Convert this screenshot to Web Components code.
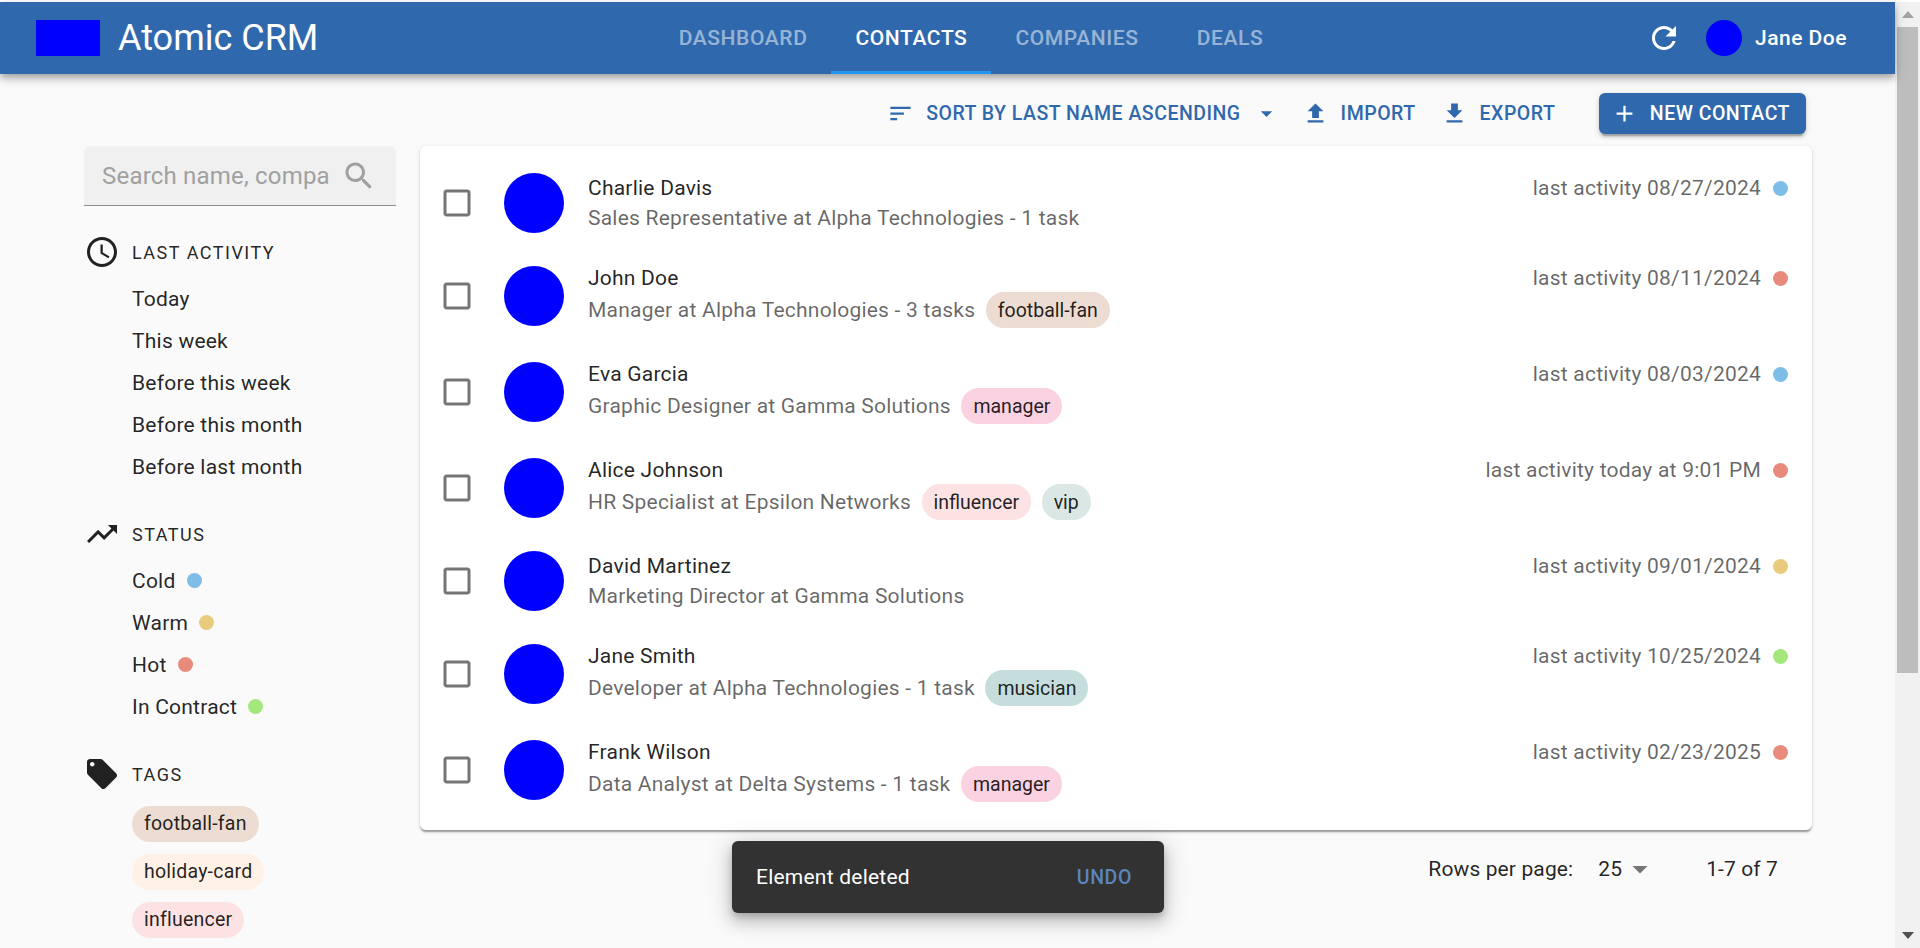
<!DOCTYPE html>
<html lang="en">
<head>
<meta charset="utf-8">
<title>Atomic CRM</title>
<style>
  html, body { margin: 0; height: 948px; overflow: hidden; background: #fff; }
  body { font-family: Roboto, "Liberation Sans", sans-serif; font-size: 21px; color: rgba(0,0,0,.87); }
</style>
</head>
<body>
<crm-app></crm-app>

<script>
const ICONS = {
  clock: 'M11.99 2C6.47 2 2 6.48 2 12s4.47 10 9.99 10C17.52 22 22 17.52 22 12S17.52 2 11.99 2zM12 20c-4.42 0-8-3.58-8-8s3.58-8 8-8 8 3.58 8 8-3.58 8-8 8zM12.5 7H11v6l5.25 3.15.75-1.23-4.5-2.67z',
  trend: 'M16 6l2.29 2.29-4.88 4.88-4-4L2 16.59 3.41 18l6-6 4 4 6.3-6.29L22 12V6z',
  tag: 'M21.41 11.58l-9-9C12.05 2.22 11.55 2 11 2H4c-1.1 0-2 .9-2 2v7c0 .55.22 1.05.59 1.42l9 9c.36.36.86.58 1.41.58.55 0 1.05-.22 1.41-.59l7-7c.37-.36.59-.86.59-1.41 0-.55-.23-1.06-.59-1.42zM5.5 7C4.67 7 4 6.33 4 5.5S4.67 4 5.5 4 7 4.67 7 5.5 6.33 7 5.5 7z',
  search: 'M15.5 14h-.79l-.28-.27C15.41 12.59 16 11.11 16 9.5 16 5.91 13.09 3 9.5 3S3 5.91 3 9.5 5.91 16 9.5 16c1.61 0 3.09-.59 4.23-1.57l.27.28v.79l5 4.99L20.49 19l-4.99-5zm-6 0C7.01 14 5 11.99 5 9.5S7.01 5 9.5 5 14 7.01 14 9.5 11.99 14 9.5 14z',
  refresh: 'M17.65 6.35C16.2 4.9 14.21 4 12 4c-4.42 0-7.99 3.58-7.99 8s3.57 8 7.99 8c3.73 0 6.84-2.55 7.73-6h-2.08c-.82 2.33-3.04 4-5.65 4-3.31 0-6-2.69-6-6s2.69-6 6-6c1.66 0 3.14.69 4.22 1.78L13 11h7V4l-2.35 2.35z',
  sort: 'M3 18h6v-2H3v2zM3 6v2h18V6H3zm0 7h12v-2H3v2z',
  upload: 'M9 16h6v-6h4l-7-7-7 7h4zm-4 2h14v2H5z',
  download: 'M19 9h-4V3H9v6H5l7 7 7-7zM5 18v2h14v-2H5z',
  add: 'M19 13h-6v6h-2v-6H5v-2h6V5h2v6h6v2z',
  box: 'M19 5v14H5V5h14m0-2H5c-1.1 0-2 .9-2 2v14c0 1.1.9 2 2 2h14c1.1 0 2-.9 2-2V5c0-1.1-.9-2-2-2z',
  caret: 'M7 10l5 5 5-5z'
};

const STATUS = { cold: '#7dbde8', warm: '#e8cb7d', hot: '#e88b7d', contract: '#a4e87d' };
const TAGS = {
  'football-fan': '#eddcd2', 'holiday-card': '#fff1e6', 'influencer': '#fde2e4',
  'manager': '#fad2e1', 'musician': '#c5dedd', 'vip': '#dbe7e4'
};

const CONTACTS = [
  { name: 'Charlie Davis', sub: 'Sales Representative at Alpha Technologies - 1 task', when: 'last activity 08/27/2024', status: 'cold', tags: [] },
  { name: 'John Doe', sub: 'Manager at Alpha Technologies - 3 tasks', when: 'last activity 08/11/2024', status: 'hot', tags: ['football-fan'] },
  { name: 'Eva Garcia', sub: 'Graphic Designer at Gamma Solutions', when: 'last activity 08/03/2024', status: 'cold', tags: ['manager'] },
  { name: 'Alice Johnson', sub: 'HR Specialist at Epsilon Networks', when: 'last activity today at 9:01 PM', status: 'hot', tags: ['influencer', 'vip'] },
  { name: 'David Martinez', sub: 'Marketing Director at Gamma Solutions', when: 'last activity 09/01/2024', status: 'warm', tags: [] },
  { name: 'Jane Smith', sub: 'Developer at Alpha Technologies - 1 task', when: 'last activity 10/25/2024', status: 'contract', tags: ['musician'] },
  { name: 'Frank Wilson', sub: 'Data Analyst at Delta Systems - 1 task', when: 'last activity 02/23/2025', status: 'hot', tags: ['manager'] }
];

class BaseElement extends HTMLElement {
  constructor() {
    super();
    this.attachShadow({mode: 'open'});
  }
  connectedCallback() {
    this.shadowRoot.innerHTML = this.render();
  }
}

class CrmIcon extends BaseElement {
  render() {
    const size = this.getAttribute('size') || 36;
    return `<style>
        :host { display: block; width: ${size}px; height: ${size}px; flex: none; }
        svg { display: block; width: 100%; height: 100%; fill: currentColor; }
      </style>
      <svg viewBox="0 0 24 24"><path d="${ICONS[this.getAttribute('name')]}"></path></svg>`;
  }
}

class StatusDot extends BaseElement {
  render() {
    return `<style>
        :host { display: inline-block; width: 15px; height: 15px; border-radius: 50%; flex: none;
                background: ${STATUS[this.getAttribute('status')]}; }
      </style>`;
  }
}

class TagChip extends BaseElement {
  render() {
    return `<style>
        :host { display: inline-flex; align-items: center; height: 36px; padding: 0 12px; border-radius: 18px;
                font-size: 19.5px; color: rgba(0,0,0,.87); background: ${TAGS[this.textContent.trim()]}; }
      </style><slot></slot>`;
  }
}

class NavTab extends BaseElement {
  render() {
    return `<style>
        :host { display: flex; align-items: center; justify-content: center; box-sizing: border-box; height: 72px;
                min-width: 135px; padding: 0 24px; font-size: 21px; font-weight: 500; letter-spacing: .6px;
                color: #fff; opacity: .5; position: relative; }
        :host([active]) { opacity: 1; }
        :host([active])::after { content: ''; position: absolute; left: 0; right: 0; bottom: 0; height: 3px; background: #2196f3; }
      </style><slot></slot>`;
  }
}

class CrmHeader extends BaseElement {
  render() {
    return `<style>
        :host { display: flex; align-items: center; justify-content: space-between; height: 72px; flex: none;
                background: #2f68ac; color: #fff; position: relative; z-index: 2;
                box-shadow: 0 3px 6px -1px rgba(0,0,0,.2), 0 6px 7px 0 rgba(0,0,0,.14), 0 1.5px 15px 0 rgba(0,0,0,.12); }
        .brand { display: flex; align-items: center; padding-left: 36px; }
        .logo { width: 64px; height: 36px; background: #0000ff; margin-right: 18px; }
        .title { font-size: 36px; line-height: 1; }
        nav { display: flex; }
        .right { display: flex; align-items: center; padding-right: 48px; }
        .reload { padding: 12px; }
        .avatar { width: 36px; height: 36px; border-radius: 50%; background: #0000ff; margin: 0 13px 0 12px; }
        .user { font-weight: 500; font-size: 21px; letter-spacing: .5px; }
      </style>
      <div class="brand"><div class="logo"></div><div class="title">Atomic CRM</div></div>
      <nav>
        <nav-tab>DASHBOARD</nav-tab>
        <nav-tab active>CONTACTS</nav-tab>
        <nav-tab>COMPANIES</nav-tab>
        <nav-tab>DEALS</nav-tab>
      </nav>
      <div class="right">
        <div class="reload"><crm-icon name="refresh"></crm-icon></div>
        <div class="avatar"></div>
        <div class="user">Jane Doe</div>
      </div>`;
  }
}

class ActionBar extends BaseElement {
  render() {
    return `<style>
        :host { display: flex; justify-content: flex-end; align-items: center; box-sizing: border-box; height: 72px;
                padding: 6px 6px 0 0; color: #2f68ac; font-size: 19.5px; font-weight: 500; letter-spacing: .5px; }
        .act { display: flex; align-items: center; gap: 12px; }
        .new { display: flex; align-items: center; gap: 12px; height: 41px; margin-left: 44px; padding: 0 16px 0 11.5px;
               border-radius: 6px; background: #2f68ac; color: #fff;
               box-shadow: 0 4.5px 1.5px -3px rgba(0,0,0,.2), 0 3px 3px 0 rgba(0,0,0,.14), 0 1.5px 7.5px 0 rgba(0,0,0,.12); }
      </style>
      <div class="act" style="margin-right:22px"><crm-icon name="sort" size="27"></crm-icon>SORT BY LAST NAME ASCENDING<crm-icon name="caret" size="27"></crm-icon></div>
      <div class="act" style="margin-right:25px"><crm-icon name="upload" size="27"></crm-icon>IMPORT</div>
      <div class="act"><crm-icon name="download" size="27"></crm-icon>EXPORT</div>
      <div class="new"><crm-icon name="add" size="27"></crm-icon>NEW CONTACT</div>`;
  }
}

class FilterSection extends BaseElement {
  render() {
    return `<style>
        :host { display: block; margin-bottom: 28.5px; }
        .head { display: flex; align-items: center; gap: 12px; height: 36px; margin-bottom: 7.5px; }
        .label { font-size: 18px; letter-spacing: 1.5px; }
        .items { padding-left: 48px; }
      </style>
      <div class="head"><crm-icon name="${this.getAttribute('icon')}"></crm-icon><div class="label">${this.getAttribute('label')}</div></div>
      <div class="items"><slot></slot></div>`;
  }
}

class FilterItem extends BaseElement {
  render() {
    return `<style>
        :host { display: flex; align-items: center; gap: 11px; height: 42px; font-size: 21px; letter-spacing: .225px; }
        :host([chip]) { height: 48px; }
      </style><slot></slot>`;
  }
}

class SearchBox extends BaseElement {
  render() {
    return `<style>
        :host { display: flex; align-items: center; box-sizing: border-box; height: 60px; padding: 0 18px; margin-bottom: 28px;
                background: #f0f0f0; border-bottom: 1.5px solid #8c8c8c; border-radius: 6px 6px 0 0; color: #a0a0a0; }
        .ph { width: 226px; white-space: nowrap; font-size: 24px; letter-spacing: .2px; margin-right: 13px; }
      </style>
      <div class="ph">Search name, compa</div><crm-icon name="search"></crm-icon>`;
  }
}

class FilterSidebar extends BaseElement {
  render() {
    return `<style>
        :host { display: block; width: 312px; flex: none; margin-right: 24px; }
      </style>
      <search-box></search-box>
      <filter-section icon="clock" label="LAST ACTIVITY">
        <filter-item>Today</filter-item>
        <filter-item>This week</filter-item>
        <filter-item>Before this week</filter-item>
        <filter-item>Before this month</filter-item>
        <filter-item>Before last month</filter-item>
      </filter-section>
      <filter-section icon="trend" label="STATUS">
        <filter-item>Cold <status-dot status="cold"></status-dot></filter-item>
        <filter-item>Warm <status-dot status="warm"></status-dot></filter-item>
        <filter-item>Hot <status-dot status="hot"></status-dot></filter-item>
        <filter-item>In Contract <status-dot status="contract"></status-dot></filter-item>
      </filter-section>
      <filter-section icon="tag" label="TAGS">
        <filter-item chip><tag-chip>football-fan</tag-chip></filter-item>
        <filter-item chip><tag-chip>holiday-card</tag-chip></filter-item>
        <filter-item chip><tag-chip>influencer</tag-chip></filter-item>
      </filter-section>`;
  }
}

class ContactRow extends BaseElement {
  render() {
    const c = JSON.parse(this.getAttribute('data'));
    const chips = c.tags.map(t => `<tag-chip>${t}</tag-chip>`).join('');
    return `<style>
        :host { display: flex; align-items: flex-start; padding: 15px 24px 15px 19px; }
        .check { width: 36px; height: 36px; margin-right: 29px; color: #757575; align-self: center; }
        .avatar { width: 60px; height: 60px; border-radius: 50%; background: #0000ff; margin-right: 24px; flex: none; align-self: center; }
        .text { flex: 1; min-width: 0; }
        .name { line-height: 30px; font-size: 21px; letter-spacing: .225px; }
        .sub { display: flex; align-items: center; gap: 10.5px; min-height: 30px; font-size: 21px; color: rgba(0,0,0,.6); }
        .sub.tagged { margin: -1px 0 1px; }
        .sub span { letter-spacing: .225px; }
        .when { display: flex; align-items: center; gap: 12px; line-height: 30px; font-size: 21px; letter-spacing: .225px; color: rgba(0,0,0,.6); }
      </style>
      <crm-icon class="check" name="box"></crm-icon>
      <div class="avatar"></div>
      <div class="text">
        <div class="name">${c.name}</div>
        <div class="sub ${c.tags.length ? 'tagged' : ''}"><span>${c.sub}</span>${chips}</div>
      </div>
      <div class="when">${c.when}<status-dot status="${c.status}"></status-dot></div>`;
  }
}

class ContactList extends BaseElement {
  render() {
    const rows = CONTACTS.map(c => `<contact-row data='${JSON.stringify(c)}'></contact-row>`).join('');
    return `<style>
        :host { display: block; padding: 12px 0; background: #fff; border-radius: 6px;
                box-shadow: 0 3px 1.5px -1.5px rgba(0,0,0,.2), 0 1.5px 1.5px 0 rgba(0,0,0,.14), 0 1.5px 4.5px 0 rgba(0,0,0,.12); }
      </style>${rows}`;
  }
}

class CrmPagination extends BaseElement {
  render() {
    return `<style>
        :host { display: flex; justify-content: flex-end; align-items: center; height: 78px; padding-right: 34px; font-size: 21px; letter-spacing: .12px; }
        .size { display: flex; align-items: center; margin: 0 48px 0 25px; }
        .caret { color: #757575; }
      </style>
      <span>Rows per page:</span>
      <div class="size">25<crm-icon class="caret" name="caret"></crm-icon></div>
      <span>1-7 of 7</span>`;
  }
}

class CrmSnackbar extends BaseElement {
  render() {
    return `<style>
        :host { position: absolute; left: 732px; bottom: 35px; z-index: 3; display: flex; align-items: center; justify-content: space-between;
                box-sizing: border-box; width: 432px; height: 72px; padding: 0 32px 0 24px; border-radius: 6px;
                background: #323232; color: #fff; font-size: 21px; letter-spacing: .225px;
                box-shadow: 0 4.5px 7.5px -1.5px rgba(0,0,0,.2), 0 9px 15px 1.5px rgba(0,0,0,.14), 0 3px 27px 3px rgba(0,0,0,.12); }
        .undo { font-size: 19.5px; font-weight: 500; letter-spacing: .6px; color: #5a85bd; }
      </style>
      <span>Element deleted</span><span class="undo">UNDO</span>`;
  }
}

class CrmScrollbar extends BaseElement {
  render() {
    return `<style>
        :host { display: flex; flex-direction: column; align-items: center; width: 25px; flex: none; background: #f1f1f1; height: 946px; }
        .up { width: 0; height: 0; margin-top: 9px; border: 6px solid transparent; border-top: 0; border-bottom: 7px solid #a3a3a3; }
        .thumb { width: 21px; height: 646px; margin-top: 9px; background: #bdbdbd; }
        .down { width: 0; height: 0; margin-top: auto; margin-bottom: 9px; border: 6px solid transparent; border-bottom: 0; border-top: 7px solid #505050; }
      </style>
      <div class="up"></div><div class="thumb"></div><div class="down"></div>`;
  }
}

class CrmApp extends BaseElement {
  render() {
    return `<style>
        :host { display: flex; box-sizing: border-box; height: 948px; padding-top: 2px; overflow: hidden; position: relative; }
        main { flex: 1; min-width: 0; display: flex; flex-direction: column; background: #fafafa; }
        .page { display: flex; padding: 0 83px 0 84px; }
        .col { flex: 1; min-width: 0; }
      </style>
      <main>
        <crm-header></crm-header>
        <div class="page">
          <div>
            <div style="height:72px"></div>
            <filter-sidebar></filter-sidebar>
          </div>
          <div class="col">
            <action-bar></action-bar>
            <contact-list></contact-list>
            <crm-pagination></crm-pagination>
          </div>
        </div>
      </main>
      <crm-scrollbar></crm-scrollbar>
      <crm-snackbar></crm-snackbar>`;
  }
}

customElements.define('crm-icon', CrmIcon);
customElements.define('status-dot', StatusDot);
customElements.define('tag-chip', TagChip);
customElements.define('nav-tab', NavTab);
customElements.define('crm-header', CrmHeader);
customElements.define('action-bar', ActionBar);
customElements.define('filter-section', FilterSection);
customElements.define('filter-item', FilterItem);
customElements.define('search-box', SearchBox);
customElements.define('filter-sidebar', FilterSidebar);
customElements.define('contact-row', ContactRow);
customElements.define('contact-list', ContactList);
customElements.define('crm-pagination', CrmPagination);
customElements.define('crm-snackbar', CrmSnackbar);
customElements.define('crm-scrollbar', CrmScrollbar);
customElements.define('crm-app', CrmApp);
</script>
</body>
</html>
